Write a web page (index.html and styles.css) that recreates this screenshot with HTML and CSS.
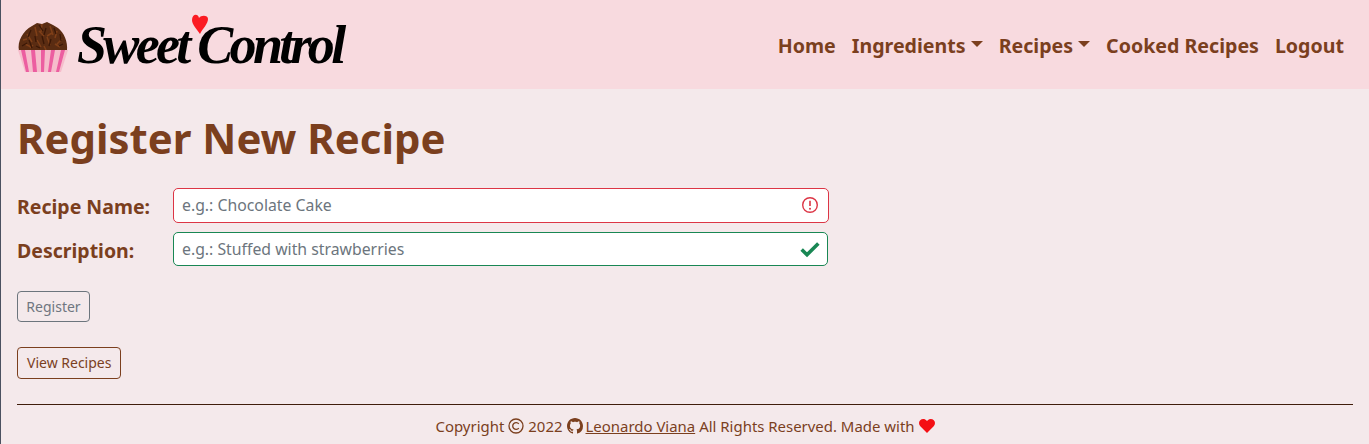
FILE: index.html
```html
<!DOCTYPE html>
<html lang="en">
<head>
<meta charset="utf-8">
<title>Sweet Control</title>
<link rel="stylesheet" href="styles.css">
</head>
<body>
<div class="page">
  <header class="navbar">
    <a class="brand" href="#">
      <svg class="cupcake" viewBox="0 0 52 52" aria-hidden="true">
        <path class="choc" d="M2 31C0 21 6 11 15 6l5-3 5 1 5-2 6 3 5 3c6 5 10 13 9 23z"/>
        <g class="sprinkles">
          <path d="M10 14l5 8M18 7l2 9M25 4l-1 8M33 6l3 9M40 11l-2 7M45 19l-5 5M8 24l6 3M20 20l4 7M30 17l3 8M38 24l5 3M16 25l-3 3M27 26l2 4M6 20l4-1M22 11l5 5M35 13l-5 3"/>
        </g>
        <g class="sprinkles-dark">
          <path d="M14 10l-3 7M22 5l4 6M29 8l-2 7M37 8l2 6M43 14l1 7M5 26l5-3M12 20l3 8M18 16l1 6M25 16l2 8M34 19l-2 7M42 26l4-2M23 28l-4-2"/>
        </g>
        <path class="liner" d="M1 30h50l-7 22H8z"/>
        <path class="stripe" d="M4 30h4l4 22H9zM14 30h4l2 22h-4zM24 30h4l-1 22h-3zM34 30h4l-4 22h-3zM44 30h4l-6 22h-3z"/>
      </svg>
      <span class="wordmark">Sweet Control</span>
      <svg class="logo-heart" viewBox="0 0 16 20" aria-hidden="true">
        <path d="M8 20C5 15 0 11 0 6c0-6 6-7 7-2 2-3 9-3 9 1 0 5-5 9-8 15z"/>
      </svg>
    </a>
    <nav class="nav">
      <a href="#">Home</a>
      <a href="#" class="caret">Ingredients</a>
      <a href="#" class="caret">Recipes</a>
      <a href="#">Cooked Recipes</a>
      <a href="#">Logout</a>
    </nav>
  </header>
  <main class="content">
    <h1 class="title">Register New Recipe</h1>
    <form class="form">
      <div class="row">
        <label class="label" for="name">Recipe Name:</label>
        <div class="field field-bad">
          <input id="name" class="input" placeholder="e.g.: Chocolate Cake">
          <svg class="state" viewBox="0 0 18 18" aria-hidden="true">
            <circle cx="9" cy="9" r="7.3" class="bad-ring"/>
            <path class="bad-mark" d="M9 4.8v5.2"/>
            <circle cx="9" cy="12.8" r="1" class="bad-dot"/>
          </svg>
        </div>
      </div>
      <div class="row row-second">
        <label class="label" for="desc">Description:</label>
        <div class="field field-good">
          <input id="desc" class="input" placeholder="e.g.: Stuffed with strawberries">
          <svg class="state state-good" viewBox="0 0 18 18" aria-hidden="true">
            <path class="good-mark" d="M1.5 9.5l4.8 4.7L16.5 4"/>
          </svg>
        </div>
      </div>
      <button type="button" class="btn btn-muted">Register</button>
    </form>
    <a href="#" class="btn btn-brown">View Recipes</a>
    <hr class="rule">
    <footer class="footer">
      <span>Copyright</span>
      <svg class="ficon" viewBox="0 0 16 16" aria-hidden="true"><circle cx="8" cy="8" r="7" class="cc"/><path class="cc" d="M10.8 10.1A3.4 3.4 0 1 1 10.8 5.9"/></svg>
      <span>2022</span>
      <svg class="ficon ficon-git" viewBox="0 0 16 16" aria-hidden="true"><path class="fill" d="M8 0C3.58 0 0 3.58 0 8c0 3.54 2.29 6.53 5.47 7.59.4.07.55-.17.55-.38 0-.19-.01-.82-.01-1.49-2.01.37-2.53-.49-2.69-.94-.09-.23-.48-.94-.82-1.13-.28-.15-.68-.52-.01-.53.63-.01 1.08.58 1.23.82.72 1.21 1.87.87 2.33.66.07-.52.28-.87.51-1.07-1.78-.2-3.64-.89-3.64-3.95 0-.87.31-1.59.82-2.15-.08-.2-.36-1.02.08-2.12 0 0 .67-.21 2.2.82.64-.18 1.32-.27 2-.27.68 0 1.36.09 2 .27 1.53-1.04 2.2-.82 2.2-.82.44 1.1.16 1.92.08 2.12.51.56.82 1.27.82 2.15 0 3.07-1.87 3.75-3.65 3.95.29.25.54.73.54 1.48 0 1.07-.01 1.93-.01 2.2 0 .21.15.46.55.38A8.013 8.013 0 0016 8c0-4.42-3.58-8-8-8z"/></svg>
      <a href="#" class="flink">Leonardo Viana</a>
      <span>All Rights Reserved. Made with</span>
      <svg class="fheart" viewBox="0 0 16 14" aria-hidden="true"><path d="M8 14L1.3 7.2C-.4 5.4-.4 2.8 1.2 1.2 2.9-.4 5.6-.4 7.2 1.3L8 2.1l.8-.8c1.6-1.7 4.3-1.7 6 -.1 1.6 1.6 1.6 4.2-.1 6z"/></svg>
    </footer>
  </main>
</div>
</body>
</html>
```

FILE: styles.css
```css
* { box-sizing: border-box; }
html, body { margin: 0; padding: 0; height: 100%; overflow: hidden; }
body {
  background: #f4e9eb;
  color: #7b3f1e;
  font-family: "Noto Sans", "Open Sans", sans-serif;
}
.page { min-height: 444px; border-left: 1px solid #4a5160; }
a { color: inherit; text-decoration: none; }

.navbar {
  height: 89px;
  background: #f8dadf;
  display: flex;
  align-items: center;
  justify-content: space-between;
  padding: 0 16px;
}
.brand { position: relative; display: flex; align-items: center; gap: 8px; color: #000; }
.cupcake { width: 52px; height: 52px; display: block; margin-top: 3px; }
.choc { fill: #5a2c12; }
.sprinkles path { stroke: #7f3f18; stroke-width: 1.5; fill: none; }
.sprinkles-dark path { stroke: #3a1706; stroke-width: 1.3; fill: none; }
.liner { fill: #f6bccb; }
.stripe { fill: #ec5ea0; }
.wordmark {
  display: block;
  width: 268px;
  font-family: "Liberation Serif", serif;
  font-style: italic;
  font-weight: 700;
  font-size: 54px;
  line-height: 60px;
  letter-spacing: -3.7px;
  white-space: nowrap;
}
.logo-heart { position: absolute; left: 175px; top: -1px; width: 16px; height: 20px; fill: #fb1a22; }

.nav { display: flex; padding-top: 2px; padding-right: 1px; }
.nav a {
  padding: 0 8px;
  font-size: 19.6px;
  font-weight: 700;
  line-height: 30px;
  display: flex;
  align-items: center;
  white-space: nowrap;
}
.caret::after {
  content: "";
  margin-left: 5px;
  margin-top: -4px;
  border-top: 6px solid currentColor;
  border-left: 6px solid transparent;
  border-right: 6px solid transparent;
}

.content { padding: 24px 16px 0; }
.title { margin: 0 0 25px; font-size: 41.9px; line-height: 50px; font-weight: 700; }
.form { display: block; }
.row { display: flex; align-items: center; }
.row-second { margin-top: 9px; }
.label { width: 156px; padding-top: 2px; font-size: 19.5px; font-weight: 700; flex: none; }
.field { position: relative; width: 656px; height: 35px; }
.field-good { width: 655px; height: 34px; }
.input {
  display: block;
  width: 100%;
  height: 100%;
  padding: 0 8px 2px;
  border: 1px solid #dc3545;
  border-radius: 5px;
  background: #fff;
  font: 15.8px "Noto Sans", sans-serif;
  color: #212529;
  outline: none;
}
.field-good .input { padding-bottom: 0; border-color: #198754; }
.input::placeholder { color: #6c757d; opacity: 1; }
.state { position: absolute; right: 10px; top: 8px; width: 18px; height: 18px; fill: none; }
.state-good { right: 8px; width: 20px; height: 20px; top: 7px; }
.bad-ring { stroke: #dc3545; stroke-width: 1.4; fill: none; }
.bad-mark { stroke: #dc3545; stroke-width: 1.6; }
.bad-dot { fill: #dc3545; }
.good-mark { stroke: #198754; stroke-width: 3.2; fill: none; }

.btn {
  display: block;
  width: max-content;
  height: 31px;
  padding: 0 9px;
  background: transparent;
  border: 1px solid;
  border-radius: 4px;
  font: 14px/29px "Noto Sans", sans-serif;
}
.btn-muted { margin-top: 25px; width: 73px; padding: 0; color: #6f7680; border-color: #6c757d; }
.btn-brown { margin-top: 25px; height: 32px; line-height: 30px; color: #7b3f1e; border-color: #7b3f1e; }
.rule { margin: 25px 0 0; border: 0; border-top: 1px solid #3f1d0b; }
.footer {
  margin-top: 11px;
  display: flex;
  justify-content: center;
  align-items: center;
  gap: 4px;
  font-size: 14.95px;
  line-height: 20px;
}
.flink { text-decoration: underline; }
.ficon { width: 16px; height: 16px; display: block; }
.ficon-git { margin-right: -1px; }
.cc { fill: none; stroke: #7b3f1e; stroke-width: 1.3; }
.fill { fill: #7b3f1e; }
.fheart { width: 16px; height: 14px; display: block; fill: #f40f14; }
```
